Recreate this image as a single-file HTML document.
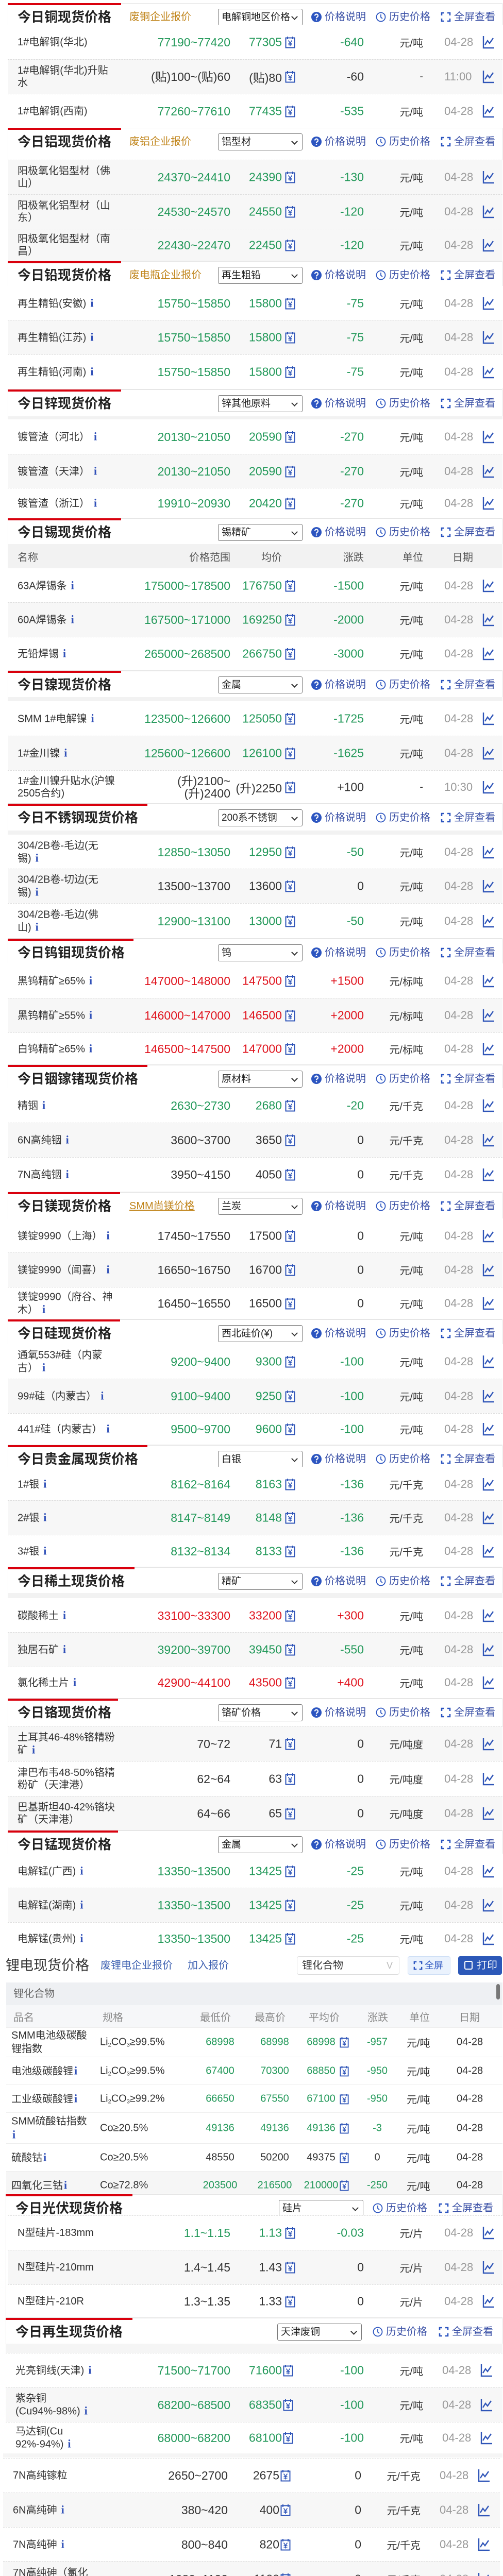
<!DOCTYPE html>
<html style="width:976px;height:5040px;overflow:hidden"><head><meta charset="utf-8">
<style>
*{box-sizing:border-box;margin:0;padding:0}
html,body{width:976px;height:5040px;overflow:hidden}
body{position:relative;background:#fff;font-family:"Liberation Sans","Noto Sans CJK SC",sans-serif;color:#333}
.sec{position:absolute;left:15px;width:960px;border:1px solid #e6e6e6;background:#fff}
.bar{position:absolute;left:-1px;top:-1px;height:4px;background:#d9000d}
.t{position:absolute;left:18px;top:8px;font-size:26px;font-weight:bold;color:#222;line-height:36px;white-space:nowrap}
.sub{position:absolute;left:235px;top:12px;font-size:20px;color:#c0841a;line-height:28px;white-space:nowrap}
.sel{position:absolute;left:407px;top:10px;width:164px;height:33px;border:1px solid #777;border-radius:3px;font-size:19px;line-height:31px;padding-left:6px;color:#222;white-space:nowrap;overflow:hidden}
.sel:after{content:"";position:absolute;right:10px;top:10px;width:7px;height:7px;border-right:2px solid #333;border-bottom:2px solid #333;transform:rotate(45deg)}
.lk{position:absolute;top:12px;font-size:20px;color:#3a50a6;line-height:28px;white-space:nowrap;display:flex;align-items:center}
.lk svg{margin-right:6px}
.r{position:absolute;left:15px;width:960px;height:67px;border-top:1px dashed #ddd;font-size:20px;color:#333;background:#fff;overflow:hidden}
.r.gr{background:#f7f7f7}
.r>*{position:absolute;top:50%;transform:translateY(-50%)}
.n{left:19px;width:190px;line-height:24px}
.n i,.i{font-family:"Liberation Serif",serif;font-weight:bold;font-style:normal;color:#3050b8;font-size:22px;margin-left:8px}
.p{right:528px;font-size:23px;text-align:right;line-height:24px;white-space:nowrap}
.a{right:428px;font-size:23px;white-space:nowrap}
.y{left:538px;width:20px;height:24px}
.c{right:269px;font-size:23px}
.u{right:154px;font-size:20px;white-space:nowrap}
.d{left:847px;font-size:22px;color:#999}
.k{left:921px;width:24px;height:26px}
.g .p,.g .a,.g .c{color:#23995a}
.rd .p,.rd .a,.rd .c{color:#e0141e}
.th{position:absolute;left:15px;width:960px;background:#f2f2f2;font-size:20px;color:#555}
.th span{position:absolute;top:50%;transform:translateY(-50%);white-space:nowrap}
.band{position:absolute;left:15px;width:960px;background:#f2f2f2}
.lr{position:absolute;left:12px;width:963px;border-top:1px solid #eee;font-size:20px;background:#fff}
.lr>*{position:absolute;top:50%;transform:translateY(-50%);white-space:nowrap}
.lr .ln{left:10px;width:165px;line-height:26px;white-space:normal}
.lr .sp{left:182px}
.lr .mn{left:376px;width:78px;text-align:center}
.lr .mx{left:482px;width:78px;text-align:center}
.lr .av{left:572px;width:78px;text-align:center}
.lr .yi{left:647px;width:18px;height:22px}
.lr .ch{left:680px;width:80px;text-align:center}
.lr .un{left:777px}
.lr .dt{left:874px;color:#333}
.lr.g .mn,.lr.g .mx,.lr.g .av,.lr.g .ch{color:#23995a}
sub{font-size:11px;vertical-align:-3px}
</style></head><body>
<svg width="0" height="0" style="position:absolute">
<defs>
<symbol id="q" viewBox="0 0 20 20"><circle cx="10" cy="10" r="10" fill="#2c55c0"/><path d="M7 7.5a3 3 0 1 1 4.5 2.6c-1 .6-1.5 1.1-1.5 2.4" stroke="#fff" stroke-width="2.2" fill="none"/><circle cx="10" cy="15.5" r="1.3" fill="#fff"/></symbol>
<symbol id="ck" viewBox="0 0 20 20"><circle cx="10" cy="10" r="8.5" stroke="#2c55c0" stroke-width="1.8" fill="none"/><path d="M10 5v5.5l3 2.5" stroke="#2c55c0" stroke-width="1.8" fill="none"/></symbol>
<symbol id="fs" viewBox="0 0 20 20"><path d="M2 7V2h5M13 2h5v5M18 13v5h-5M7 18H2v-5" stroke="#2c55c0" stroke-width="2.6" fill="none"/></symbol>
<symbol id="yn" viewBox="0 0 20 24"><rect x="1.5" y="3.5" width="17" height="19" stroke="#2f55b8" stroke-width="2" fill="#fff"/><path d="M5 1v5M15 1v5" stroke="#2f55b8" stroke-width="2"/><path d="M6.5 8.5l3.5 5 3.5-5M10 13.5v6M6.5 14h7M6.5 17h7" stroke="#2f55b8" stroke-width="1.6" fill="none"/></symbol>
<symbol id="kc" viewBox="0 0 24 26"><path d="M2 1v23h21" stroke="#2f55b8" stroke-width="2.4" fill="none"/><path d="M5 18l5-8 4 5 7-10" stroke="#2f55b8" stroke-width="2.4" fill="none"/></symbol>
</defs></svg>

<!-- Copper -->
<div class="sec" style="top:6px;height:243px"><div class="bar" style="width:220px"></div><div class="t">今日铜现货价格</div><div class="sub">废铜企业报价</div><div class="sel">电解铜地区价格</div>
<div class="lk" style="left:588px"><svg width="20" height="20"><use href="#q"/></svg>价格说明</div><div class="lk" style="left:713px"><svg width="20" height="20"><use href="#ck"/></svg>历史价格</div><div class="lk" style="left:839px"><svg width="20" height="20"><use href="#fs"/></svg>全屏查看</div></div>
<div class="r g" style="top:48px;border-top:none"><span class="n">1#电解铜(华北)</span><span class="p">77190~77420</span><span class="a">77305</span><svg class="y"><use href="#yn"/></svg><span class="c">-640</span><span class="u">元/吨</span><span class="d">04-28</span><svg class="k"><use href="#kc"/></svg></div>
<div class="r gr" style="top:115px"><span class="n">1#电解铜(华北)升贴水</span><span class="p">(贴)100~(贴)60</span><span class="a">(贴)80</span><svg class="y"><use href="#yn"/></svg><span class="c">-60</span><span class="u">-</span><span class="d">11:00</span><svg class="k"><use href="#kc"/></svg></div>
<div class="r g" style="top:182px;height:66px"><span class="n">1#电解铜(西南)</span><span class="p">77260~77610</span><span class="a">77435</span><svg class="y"><use href="#yn"/></svg><span class="c">-535</span><span class="u">元/吨</span><span class="d">04-28</span><svg class="k"><use href="#kc"/></svg></div>

<!-- Aluminium -->
<div class="sec" style="top:248px;height:259px"><div class="bar" style="width:220px"></div><div class="t">今日铝现货价格</div><div class="sub">废铝企业报价</div><div class="sel">铝型材</div>
<div class="lk" style="left:588px"><svg width="20" height="20"><use href="#q"/></svg>价格说明</div><div class="lk" style="left:713px"><svg width="20" height="20"><use href="#ck"/></svg>历史价格</div><div class="lk" style="left:839px"><svg width="20" height="20"><use href="#fs"/></svg>全屏查看</div></div>
<div class="r g gr" style="top:310px"><span class="n">阳极氧化铝型材（佛山）</span><span class="p">24370~24410</span><span class="a">24390</span><svg class="y"><use href="#yn"/></svg><span class="c">-130</span><span class="u">元/吨</span><span class="d">04-28</span><svg class="k"><use href="#kc"/></svg></div>
<div class="r g gr" style="top:377px"><span class="n">阳极氧化铝型材（山东）</span><span class="p">24530~24570</span><span class="a">24550</span><svg class="y"><use href="#yn"/></svg><span class="c">-120</span><span class="u">元/吨</span><span class="d">04-28</span><svg class="k"><use href="#kc"/></svg></div>
<div class="r g gr" style="top:444px;height:62px"><span class="n">阳极氧化铝型材（南昌）</span><span class="p">22430~22470</span><span class="a">22450</span><svg class="y"><use href="#yn"/></svg><span class="c">-120</span><span class="u">元/吨</span><span class="d">04-28</span><svg class="k"><use href="#kc"/></svg></div>

<!-- Lead -->
<div class="sec" style="top:507px;height:249px"><div class="bar" style="width:220px"></div><div class="t">今日铅现货价格</div><div class="sub">废电瓶企业报价</div><div class="sel">再生粗铅</div>
<div class="lk" style="left:588px"><svg width="20" height="20"><use href="#q"/></svg>价格说明</div><div class="lk" style="left:713px"><svg width="20" height="20"><use href="#ck"/></svg>历史价格</div><div class="lk" style="left:839px"><svg width="20" height="20"><use href="#fs"/></svg>全屏查看</div></div>
<div class="r g" style="top:555px;border-top:none"><span class="n">再生精铅(安徽)<i>i</i></span><span class="p">15750~15850</span><span class="a">15800</span><svg class="y"><use href="#yn"/></svg><span class="c">-75</span><span class="u">元/吨</span><span class="d">04-28</span><svg class="k"><use href="#kc"/></svg></div>
<div class="r g gr" style="top:621px"><span class="n">再生精铅(江苏)<i>i</i></span><span class="p">15750~15850</span><span class="a">15800</span><svg class="y"><use href="#yn"/></svg><span class="c">-75</span><span class="u">元/吨</span><span class="d">04-28</span><svg class="k"><use href="#kc"/></svg></div>
<div class="r g" style="top:688px;height:66px"><span class="n">再生精铅(河南)<i>i</i></span><span class="p">15750~15850</span><span class="a">15800</span><svg class="y"><use href="#yn"/></svg><span class="c">-75</span><span class="u">元/吨</span><span class="d">04-28</span><svg class="k"><use href="#kc"/></svg></div>

<!-- Zinc -->
<div class="sec" style="top:756px;height:250px"><div class="bar" style="width:220px"></div><div class="t">今日锌现货价格</div><div class="sel">锌其他原料</div>
<div class="lk" style="left:588px"><svg width="20" height="20"><use href="#q"/></svg>价格说明</div><div class="lk" style="left:713px"><svg width="20" height="20"><use href="#ck"/></svg>历史价格</div><div class="lk" style="left:839px"><svg width="20" height="20"><use href="#fs"/></svg>全屏查看</div></div>
<div class="band" style="top:808px;height:6px"></div>
<div class="r g" style="top:814px;border-top:none"><span class="n">镀管渣（河北）<i>i</i></span><span class="p">20130~21050</span><span class="a">20590</span><svg class="y"><use href="#yn"/></svg><span class="c">-270</span><span class="u">元/吨</span><span class="d">04-28</span><svg class="k"><use href="#kc"/></svg></div>
<div class="r g gr" style="top:881px"><span class="n">镀管渣（天津）<i>i</i></span><span class="p">20130~21050</span><span class="a">20590</span><svg class="y"><use href="#yn"/></svg><span class="c">-270</span><span class="u">元/吨</span><span class="d">04-28</span><svg class="k"><use href="#kc"/></svg></div>
<div class="r g" style="top:947px;height:58px"><span class="n">镀管渣（浙江）<i>i</i></span><span class="p">19910~20930</span><span class="a">20420</span><svg class="y"><use href="#yn"/></svg><span class="c">-270</span><span class="u">元/吨</span><span class="d">04-28</span><svg class="k"><use href="#kc"/></svg></div>

<!-- Tin -->
<div class="sec" style="top:1006px;height:296px"><div class="bar" style="width:220px"></div><div class="t">今日锡现货价格</div><div class="sel">锡精矿</div>
<div class="lk" style="left:588px"><svg width="20" height="20"><use href="#q"/></svg>价格说明</div><div class="lk" style="left:713px"><svg width="20" height="20"><use href="#ck"/></svg>历史价格</div><div class="lk" style="left:839px"><svg width="20" height="20"><use href="#fs"/></svg>全屏查看</div></div>
<div class="th" style="top:1056px;height:47px"><span style="left:19px">名称</span><span style="right:528px">价格范围</span><span style="right:428px">均价</span><span style="right:269px">涨跌</span><span style="right:154px">单位</span><span style="left:863px">日期</span></div>
<div class="r g" style="top:1103px;border-top:none"><span class="n">63A焊锡条<i>i</i></span><span class="p">175000~178500</span><span class="a">176750</span><svg class="y"><use href="#yn"/></svg><span class="c">-1500</span><span class="u">元/吨</span><span class="d">04-28</span><svg class="k"><use href="#kc"/></svg></div>
<div class="r g gr" style="top:1169px"><span class="n">60A焊锡条<i>i</i></span><span class="p">167500~171000</span><span class="a">169250</span><svg class="y"><use href="#yn"/></svg><span class="c">-2000</span><span class="u">元/吨</span><span class="d">04-28</span><svg class="k"><use href="#kc"/></svg></div>
<div class="r g" style="top:1236px;height:65px"><span class="n">无铅焊锡<i>i</i></span><span class="p">265000~268500</span><span class="a">266750</span><svg class="y"><use href="#yn"/></svg><span class="c">-3000</span><span class="u">元/吨</span><span class="d">04-28</span><svg class="k"><use href="#kc"/></svg></div>

<!-- Nickel -->
<div class="sec" style="top:1302px;height:258px"><div class="bar" style="width:220px"></div><div class="t">今日镍现货价格</div><div class="sel">金属</div>
<div class="lk" style="left:588px"><svg width="20" height="20"><use href="#q"/></svg>价格说明</div><div class="lk" style="left:713px"><svg width="20" height="20"><use href="#ck"/></svg>历史价格</div><div class="lk" style="left:839px"><svg width="20" height="20"><use href="#fs"/></svg>全屏查看</div></div>
<div class="band" style="top:1353px;height:8px"></div>
<div class="r g" style="top:1361px;border-top:none"><span class="n">SMM 1#电解镍<i>i</i></span><span class="p">123500~126600</span><span class="a">125050</span><svg class="y"><use href="#yn"/></svg><span class="c">-1725</span><span class="u">元/吨</span><span class="d">04-28</span><svg class="k"><use href="#kc"/></svg></div>
<div class="r g gr" style="top:1428px"><span class="n">1#金川镍<i>i</i></span><span class="p">125600~126600</span><span class="a">126100</span><svg class="y"><use href="#yn"/></svg><span class="c">-1625</span><span class="u">元/吨</span><span class="d">04-28</span><svg class="k"><use href="#kc"/></svg></div>
<div class="r" style="top:1495px;height:64px"><span class="n">1#金川镍升贴水(沪镍2505合约)</span><span class="p">(升)2100~<br>(升)2400</span><span class="a">(升)2250</span><svg class="y"><use href="#yn"/></svg><span class="c">+100</span><span class="u">-</span><span class="d">10:30</span><svg class="k"><use href="#kc"/></svg></div>

<!-- Stainless -->
<div class="sec" style="top:1560px;height:262px"><div class="bar" style="width:271px"></div><div class="t">今日不锈钢现货价格</div><div class="sel">200系不锈钢</div>
<div class="lk" style="left:588px"><svg width="20" height="20"><use href="#q"/></svg>价格说明</div><div class="lk" style="left:713px"><svg width="20" height="20"><use href="#ck"/></svg>历史价格</div><div class="lk" style="left:839px"><svg width="20" height="20"><use href="#fs"/></svg>全屏查看</div></div>
<div class="band" style="top:1612px;height:8px"></div>
<div class="r g" style="top:1620px;border-top:none"><span class="n">304/2B卷-毛边(无锡)<i>i</i></span><span class="p">12850~13050</span><span class="a">12950</span><svg class="y"><use href="#yn"/></svg><span class="c">-50</span><span class="u">元/吨</span><span class="d">04-28</span><svg class="k"><use href="#kc"/></svg></div>
<div class="r gr" style="top:1686px"><span class="n">304/2B卷-切边(无锡)<i>i</i></span><span class="p">13500~13700</span><span class="a">13600</span><svg class="y"><use href="#yn"/></svg><span class="c">0</span><span class="u">元/吨</span><span class="d">04-28</span><svg class="k"><use href="#kc"/></svg></div>
<div class="r g" style="top:1753px;height:68px"><span class="n">304/2B卷-毛边(佛山)<i>i</i></span><span class="p">12900~13100</span><span class="a">13000</span><svg class="y"><use href="#yn"/></svg><span class="c">-50</span><span class="u">元/吨</span><span class="d">04-28</span><svg class="k"><use href="#kc"/></svg></div>

<!-- Tungsten -->
<div class="sec" style="top:1822px;height:245px"><div class="bar" style="width:244px"></div><div class="t">今日钨钼现货价格</div><div class="sel">钨</div>
<div class="lk" style="left:588px"><svg width="20" height="20"><use href="#q"/></svg>价格说明</div><div class="lk" style="left:713px"><svg width="20" height="20"><use href="#ck"/></svg>历史价格</div><div class="lk" style="left:839px"><svg width="20" height="20"><use href="#fs"/></svg>全屏查看</div></div>
<div class="r rd" style="top:1870px;border-top:none"><span class="n">黑钨精矿≥65%<i>i</i></span><span class="p">147000~148000</span><span class="a">147500</span><svg class="y"><use href="#yn"/></svg><span class="c">+1500</span><span class="u">元/标吨</span><span class="d">04-28</span><svg class="k"><use href="#kc"/></svg></div>
<div class="r rd gr" style="top:1937px"><span class="n">黑钨精矿≥55%<i>i</i></span><span class="p">146000~147000</span><span class="a">146500</span><svg class="y"><use href="#yn"/></svg><span class="c">+2000</span><span class="u">元/标吨</span><span class="d">04-28</span><svg class="k"><use href="#kc"/></svg></div>
<div class="r rd" style="top:2004px;height:62px"><span class="n">白钨精矿≥65%<i>i</i></span><span class="p">146500~147500</span><span class="a">147000</span><svg class="y"><use href="#yn"/></svg><span class="c">+2000</span><span class="u">元/标吨</span><span class="d">04-28</span><svg class="k"><use href="#kc"/></svg></div>

<!-- Indium -->
<div class="sec" style="top:2067px;height:247px"><div class="bar" style="width:271px"></div><div class="t">今日铟镓锗现货价格</div><div class="sel">原材料</div>
<div class="lk" style="left:588px"><svg width="20" height="20"><use href="#q"/></svg>价格说明</div><div class="lk" style="left:713px"><svg width="20" height="20"><use href="#ck"/></svg>历史价格</div><div class="lk" style="left:839px"><svg width="20" height="20"><use href="#fs"/></svg>全屏查看</div></div>
<div class="r g" style="top:2112px;border-top:none"><span class="n">精铟<i>i</i></span><span class="p">2630~2730</span><span class="a">2680</span><svg class="y"><use href="#yn"/></svg><span class="c">-20</span><span class="u">元/千克</span><span class="d">04-28</span><svg class="k"><use href="#kc"/></svg></div>
<div class="r gr" style="top:2179px"><span class="n">6N高纯铟<i>i</i></span><span class="p">3600~3700</span><span class="a">3650</span><svg class="y"><use href="#yn"/></svg><span class="c">0</span><span class="u">元/千克</span><span class="d">04-28</span><svg class="k"><use href="#kc"/></svg></div>
<div class="r" style="top:2246px;height:67px"><span class="n">7N高纯铟<i>i</i></span><span class="p">3950~4150</span><span class="a">4050</span><svg class="y"><use href="#yn"/></svg><span class="c">0</span><span class="u">元/千克</span><span class="d">04-28</span><svg class="k"><use href="#kc"/></svg></div>

<!-- Magnesium -->
<div class="sec" style="top:2314px;height:247px"><div class="bar" style="width:218px"></div><div class="t">今日镁现货价格</div><div class="sub" style="text-decoration:underline">SMM尚镁价格</div><div class="sel">兰炭</div>
<div class="lk" style="left:588px"><svg width="20" height="20"><use href="#q"/></svg>价格说明</div><div class="lk" style="left:713px"><svg width="20" height="20"><use href="#ck"/></svg>历史价格</div><div class="lk" style="left:839px"><svg width="20" height="20"><use href="#fs"/></svg>全屏查看</div></div>
<div class="r" style="top:2365px;border-top:none"><span class="n">镁锭9990（上海）<i>i</i></span><span class="p">17450~17550</span><span class="a">17500</span><svg class="y"><use href="#yn"/></svg><span class="c">0</span><span class="u">元/吨</span><span class="d">04-28</span><svg class="k"><use href="#kc"/></svg></div>
<div class="r gr" style="top:2431px"><span class="n">镁锭9990（闻喜）<i>i</i></span><span class="p">16650~16750</span><span class="a">16700</span><svg class="y"><use href="#yn"/></svg><span class="c">0</span><span class="u">元/吨</span><span class="d">04-28</span><svg class="k"><use href="#kc"/></svg></div>
<div class="r" style="top:2498px;height:62px"><span class="n">镁锭9990（府谷、神木）<i>i</i></span><span class="p">16450~16550</span><span class="a">16500</span><svg class="y"><use href="#yn"/></svg><span class="c">0</span><span class="u">元/吨</span><span class="d">04-28</span><svg class="k"><use href="#kc"/></svg></div>

<!-- Silicon -->
<div class="sec" style="top:2561px;height:244px"><div class="bar" style="width:218px"></div><div class="t">今日硅现货价格</div><div class="sel">西北硅价(¥)</div>
<div class="lk" style="left:588px"><svg width="20" height="20"><use href="#q"/></svg>价格说明</div><div class="lk" style="left:713px"><svg width="20" height="20"><use href="#ck"/></svg>历史价格</div><div class="lk" style="left:839px"><svg width="20" height="20"><use href="#fs"/></svg>全屏查看</div></div>
<div class="r g" style="top:2609px;border-top:none"><span class="n" style="width:172px">通氧553#硅（内蒙古）<i>i</i></span><span class="p">9200~9400</span><span class="a">9300</span><svg class="y"><use href="#yn"/></svg><span class="c">-100</span><span class="u">元/吨</span><span class="d">04-28</span><svg class="k"><use href="#kc"/></svg></div>
<div class="r g gr" style="top:2676px"><span class="n">99#硅（内蒙古）<i>i</i></span><span class="p">9100~9400</span><span class="a">9250</span><svg class="y"><use href="#yn"/></svg><span class="c">-100</span><span class="u">元/吨</span><span class="d">04-28</span><svg class="k"><use href="#kc"/></svg></div>
<div class="r g" style="top:2743px;height:61px"><span class="n">441#硅（内蒙古）<i>i</i></span><span class="p">9500~9700</span><span class="a">9600</span><svg class="y"><use href="#yn"/></svg><span class="c">-100</span><span class="u">元/吨</span><span class="d">04-28</span><svg class="k"><use href="#kc"/></svg></div>

<!-- Precious -->
<div class="sec" style="top:2805px;height:237px"><div class="bar" style="width:271px"></div><div class="t">今日贵金属现货价格</div><div class="sel">白银</div>
<div class="lk" style="left:588px"><svg width="20" height="20"><use href="#q"/></svg>价格说明</div><div class="lk" style="left:713px"><svg width="20" height="20"><use href="#ck"/></svg>历史价格</div><div class="lk" style="left:839px"><svg width="20" height="20"><use href="#fs"/></svg>全屏查看</div></div>
<div class="r g" style="top:2847px;border-top:none"><span class="n">1#银<i>i</i></span><span class="p">8162~8164</span><span class="a">8163</span><svg class="y"><use href="#yn"/></svg><span class="c">-136</span><span class="u">元/千克</span><span class="d">04-28</span><svg class="k"><use href="#kc"/></svg></div>
<div class="r g gr" style="top:2912px"><span class="n">2#银<i>i</i></span><span class="p">8147~8149</span><span class="a">8148</span><svg class="y"><use href="#yn"/></svg><span class="c">-136</span><span class="u">元/千克</span><span class="d">04-28</span><svg class="k"><use href="#kc"/></svg></div>
<div class="r g" style="top:2979px;height:62px"><span class="n">3#银<i>i</i></span><span class="p">8132~8134</span><span class="a">8133</span><svg class="y"><use href="#yn"/></svg><span class="c">-136</span><span class="u">元/千克</span><span class="d">04-28</span><svg class="k"><use href="#kc"/></svg></div>

<!-- Rare earth -->
<div class="sec" style="top:3042px;height:255px"><div class="bar" style="width:246px"></div><div class="t">今日稀土现货价格</div><div class="sel">精矿</div>
<div class="lk" style="left:588px"><svg width="20" height="20"><use href="#q"/></svg>价格说明</div><div class="lk" style="left:713px"><svg width="20" height="20"><use href="#ck"/></svg>历史价格</div><div class="lk" style="left:839px"><svg width="20" height="20"><use href="#fs"/></svg>全屏查看</div></div>
<div class="band" style="top:3092px;height:10px"></div>
<div class="r rd" style="top:3102px;border-top:none"><span class="n">碳酸稀土<i>i</i></span><span class="p">33100~33300</span><span class="a">33200</span><svg class="y"><use href="#yn"/></svg><span class="c">+300</span><span class="u">元/吨</span><span class="d">04-28</span><svg class="k"><use href="#kc"/></svg></div>
<div class="r g gr" style="top:3168px"><span class="n">独居石矿<i>i</i></span><span class="p">39200~39700</span><span class="a">39450</span><svg class="y"><use href="#yn"/></svg><span class="c">-550</span><span class="u">元/吨</span><span class="d">04-28</span><svg class="k"><use href="#kc"/></svg></div>
<div class="r rd" style="top:3235px;height:61px"><span class="n">氯化稀土片<i>i</i></span><span class="p">42900~44100</span><span class="a">43500</span><svg class="y"><use href="#yn"/></svg><span class="c">+400</span><span class="u">元/吨</span><span class="d">04-28</span><svg class="k"><use href="#kc"/></svg></div>

<!-- Chromium -->
<div class="sec" style="top:3297px;height:256px"><div class="bar" style="width:214px"></div><div class="t">今日铬现货价格</div><div class="sel">铬矿价格</div>
<div class="lk" style="left:588px"><svg width="20" height="20"><use href="#q"/></svg>价格说明</div><div class="lk" style="left:713px"><svg width="20" height="20"><use href="#ck"/></svg>历史价格</div><div class="lk" style="left:839px"><svg width="20" height="20"><use href="#fs"/></svg>全屏查看</div></div>
<div class="r gr" style="top:3351px"><span class="n">土耳其46-48%铬精粉矿<i>i</i></span><span class="p">70~72</span><span class="a">71</span><svg class="y"><use href="#yn"/></svg><span class="c">0</span><span class="u">元/吨度</span><span class="d">04-28</span><svg class="k"><use href="#kc"/></svg></div>
<div class="r" style="top:3419px"><span class="n">津巴布韦48-50%铬精粉矿（天津港）</span><span class="p">62~64</span><span class="a">63</span><svg class="y"><use href="#yn"/></svg><span class="c">0</span><span class="u">元/吨度</span><span class="d">04-28</span><svg class="k"><use href="#kc"/></svg></div>
<div class="r gr" style="top:3486px;height:66px"><span class="n">巴基斯坦40-42%铬块矿（天津港）</span><span class="p">64~66</span><span class="a">65</span><svg class="y"><use href="#yn"/></svg><span class="c">0</span><span class="u">元/吨度</span><span class="d">04-28</span><svg class="k"><use href="#kc"/></svg></div>

<!-- Manganese -->
<div class="sec" style="top:3553px;height:240px"><div class="bar" style="width:214px"></div><div class="t">今日锰现货价格</div><div class="sel">金属</div>
<div class="lk" style="left:588px"><svg width="20" height="20"><use href="#q"/></svg>价格说明</div><div class="lk" style="left:713px"><svg width="20" height="20"><use href="#ck"/></svg>历史价格</div><div class="lk" style="left:839px"><svg width="20" height="20"><use href="#fs"/></svg>全屏查看</div></div>
<div class="r g" style="top:3598px;border-top:none"><span class="n">电解锰(广西)<i>i</i></span><span class="p">13350~13500</span><span class="a">13425</span><svg class="y"><use href="#yn"/></svg><span class="c">-25</span><span class="u">元/吨</span><span class="d">04-28</span><svg class="k"><use href="#kc"/></svg></div>
<div class="r g gr" style="top:3664px"><span class="n">电解锰(湖南)<i>i</i></span><span class="p">13350~13500</span><span class="a">13425</span><svg class="y"><use href="#yn"/></svg><span class="c">-25</span><span class="u">元/吨</span><span class="d">04-28</span><svg class="k"><use href="#kc"/></svg></div>
<div class="r g" style="top:3731px;height:62px"><span class="n">电解锰(贵州)<i>i</i></span><span class="p">13350~13500</span><span class="a">13425</span><svg class="y"><use href="#yn"/></svg><span class="c">-25</span><span class="u">元/吨</span><span class="d">04-28</span><svg class="k"><use href="#kc"/></svg></div>

<!-- Lithium -->
<div style="position:absolute;left:11px;top:3795px;font-size:27px;color:#333;line-height:40px">锂电现货价格</div>
<div style="position:absolute;left:195px;top:3801px;font-size:20px;color:#3c5fb0;line-height:28px">废锂电企业报价</div>
<div style="position:absolute;left:364px;top:3801px;font-size:20px;color:#3c5fb0;line-height:28px">加入报价</div>
<div style="position:absolute;left:576px;top:3797px;width:199px;height:36px;border:1px solid #ddd;border-radius:4px;font-size:20px;line-height:34px;padding-left:9px;color:#333">锂化合物<span style="position:absolute;right:12px;top:0;color:#bbb;font-size:18px">V</span></div>
<div style="position:absolute;left:791px;top:3797px;width:83px;height:36px;border:1px solid #cfdff5;border-radius:4px;background:#eaf2fd;font-size:18px;line-height:34px;color:#2c55c0;padding-left:32px"><svg width="18" height="18" style="position:absolute;left:10px;top:8px"><use href="#fs"/></svg>全屏</div>
<div style="position:absolute;left:889px;top:3797px;width:85px;height:36px;border-radius:4px;background:#2c58b8;font-size:20px;line-height:36px;color:#fff;padding-left:36px"><span style="position:absolute;left:12px;top:9px;width:16px;height:17px;border:2.5px solid #fff;border-radius:3px"></span>打印</div>
<div style="position:absolute;left:12px;top:3848px;width:963px;height:44px;background:#eef0f3;font-size:20px;color:#666;line-height:44px;padding-left:14px">锂化合物</div>
<div style="position:absolute;left:963px;top:3851px;width:7px;height:30px;border-radius:4px;background:#777"></div>
<div class="th" style="left:12px;width:963px;top:3892px;height:43px;background:#f6f7f9;color:#888"><span style="left:14px">品名</span><span style="left:187px">规格</span><span style="left:376px">最低价</span><span style="left:482px">最高价</span><span style="left:587px">平均价</span><span style="left:701px">涨跌</span><span style="left:782px">单位</span><span style="left:879px">日期</span></div>
<div class="lr g" style="top:3935px;height:57px"><span class="ln">SMM电池级碳酸锂指数</span><span class="sp">Li<sub>2</sub>CO<sub>3</sub>≥99.5%</span><span class="mn">68998</span><span class="mx">68998</span><span class="av">68998</span><svg class="yi" viewBox="0 0 20 24"><use href="#yn"/></svg><span class="ch">-957</span><span class="un">元/吨</span><span class="dt">04-28</span></div>
<div class="lr g" style="top:3992px;height:54px"><span class="ln">电池级碳酸锂<i class="i" style="margin-left:2px">i</i></span><span class="sp">Li<sub>2</sub>CO<sub>3</sub>≥99.5%</span><span class="mn">67400</span><span class="mx">70300</span><span class="av">68850</span><svg class="yi" viewBox="0 0 20 24"><use href="#yn"/></svg><span class="ch">-950</span><span class="un">元/吨</span><span class="dt">04-28</span></div>
<div class="lr g" style="top:4046px;height:54px"><span class="ln">工业级碳酸锂<i class="i" style="margin-left:2px">i</i></span><span class="sp">Li<sub>2</sub>CO<sub>3</sub>≥99.2%</span><span class="mn">66650</span><span class="mx">67550</span><span class="av">67100</span><svg class="yi" viewBox="0 0 20 24"><use href="#yn"/></svg><span class="ch">-950</span><span class="un">元/吨</span><span class="dt">04-28</span></div>
<div class="lr g" style="top:4100px;height:60px"><span class="ln">SMM硫酸钴指数<br><i class="i" style="margin-left:2px">i</i></span><span class="sp">Co≥20.5%</span><span class="mn">49136</span><span class="mx">49136</span><span class="av">49136</span><svg class="yi" viewBox="0 0 20 24"><use href="#yn"/></svg><span class="ch">-3</span><span class="un">元/吨</span><span class="dt">04-28</span></div>
<div class="lr" style="top:4160px;height:54px"><span class="ln">硫酸钴<i class="i" style="margin-left:2px">i</i></span><span class="sp">Co≥20.5%</span><span class="mn">48550</span><span class="mx">50200</span><span class="av">49375</span><svg class="yi" viewBox="0 0 20 24"><use href="#yn"/></svg><span class="ch">0</span><span class="un">元/吨</span><span class="dt">04-28</span></div>
<div class="lr g" style="top:4214px;height:44px;background:#f6f6f6;overflow:hidden"><span class="ln" style="top:62%">四氧化三钴<i class="i" style="margin-left:2px">i</i></span><span class="sp" style="top:62%">Co≥72.8%</span><span class="mn" style="top:62%">203500</span><span class="mx" style="top:62%">216500</span><span class="av" style="top:62%">210000</span><svg class="yi" viewBox="0 0 20 24" style="top:62%"><use href="#yn"/></svg><span class="ch" style="top:62%">-250</span><span class="un" style="top:62%">元/吨</span><span class="dt" style="top:62%">04-28</span></div>

<!-- PV -->
<div class="sec" style="top:4259px;left:11px;width:964px;height:240px"><div class="bar" style="width:246px"></div><div class="t">今日光伏现货价格</div><div class="sel" style="left:529px">硅片</div>
<div class="lk" style="left:711px"><svg width="20" height="20"><use href="#ck"/></svg>历史价格</div><div class="lk" style="left:839px"><svg width="20" height="20"><use href="#fs"/></svg>全屏查看</div></div>
<div class="r g" style="top:4300px"><span class="n">N型硅片-183mm</span><span class="p">1.1~1.15</span><span class="a">1.13</span><svg class="y"><use href="#yn"/></svg><span class="c">-0.03</span><span class="u">元/片</span><span class="d">04-28</span><svg class="k"><use href="#kc"/></svg></div>
<div class="r gr" style="top:4367px"><span class="n">N型硅片-210mm</span><span class="p">1.4~1.45</span><span class="a">1.43</span><svg class="y"><use href="#yn"/></svg><span class="c">0</span><span class="u">元/片</span><span class="d">04-28</span><svg class="k"><use href="#kc"/></svg></div>
<div class="r" style="top:4434px;height:64px"><span class="n">N型硅片-210R</span><span class="p">1.3~1.35</span><span class="a">1.33</span><svg class="y"><use href="#yn"/></svg><span class="c">0</span><span class="u">元/片</span><span class="d">04-28</span><svg class="k"><use href="#kc"/></svg></div>

<!-- Recycling -->
<div class="sec" style="top:4499px;left:11px;width:964px;height:263px"><div class="bar" style="width:246px"></div><div class="t">今日再生现货价格</div><div class="sel" style="left:526px">天津废铜</div>
<div class="lk" style="left:711px"><svg width="20" height="20"><use href="#ck"/></svg>历史价格</div><div class="lk" style="left:839px"><svg width="20" height="20"><use href="#fs"/></svg>全屏查看</div></div>
<div class="band" style="left:11px;width:964px;top:4549px;height:18px;background:#f5f5f5"></div>
<div class="r g" style="top:4567px;left:11px;width:964px"><span class="n">光亮铜线(天津)<i>i</i></span><span class="p">71500~71700</span><span class="a">71600</span><svg class="y"><use href="#yn"/></svg><span class="c">-100</span><span class="u">元/吨</span><span class="d">04-28</span><svg class="k"><use href="#kc"/></svg></div>
<div class="r g gr" style="top:4634px;left:11px;width:964px"><span class="n">紫杂铜(Cu94%-98%)<i>i</i></span><span class="p">68200~68500</span><span class="a">68350</span><svg class="y"><use href="#yn"/></svg><span class="c">-100</span><span class="u">元/吨</span><span class="d">04-28</span><svg class="k"><use href="#kc"/></svg></div>
<div class="r g" style="top:4701px;left:11px;width:964px;height:61px"><span class="n">马达铜(Cu 92%-94%)<i>i</i></span><span class="p">68000~68200</span><span class="a">68100</span><svg class="y"><use href="#yn"/></svg><span class="c">-100</span><span class="u">元/吨</span><span class="d">04-28</span><svg class="k"><use href="#kc"/></svg></div>

<!-- Gallium / Arsenic -->
<div class="band" style="left:6px;width:969px;top:4762px;height:8px;background:#f5f5f5"></div>
<div class="r" style="top:4771px;left:6px;width:964px"><span class="n">7N高纯镓粒</span><span class="p">2650~2700</span><span class="a">2675</span><svg class="y"><use href="#yn"/></svg><span class="c">0</span><span class="u">元/千克</span><span class="d">04-28</span><svg class="k"><use href="#kc"/></svg></div>
<div class="r gr" style="top:4838px;left:6px;width:964px"><span class="n">6N高纯砷<i>i</i></span><span class="p">380~420</span><span class="a">400</span><svg class="y"><use href="#yn"/></svg><span class="c">0</span><span class="u">元/千克</span><span class="d">04-28</span><svg class="k"><use href="#kc"/></svg></div>
<div class="r" style="top:4905px;left:6px;width:964px"><span class="n">7N高纯砷<i>i</i></span><span class="p">800~840</span><span class="a">820</span><svg class="y"><use href="#yn"/></svg><span class="c">0</span><span class="u">元/千克</span><span class="d">04-28</span><svg class="k"><use href="#kc"/></svg></div>
<div class="r gr" style="top:4971px;left:6px;width:964px;height:69px"><span class="n" style="width:150px">7N高纯砷（氯化精馏）</span><span class="p">1080~1120</span><span class="a">1100</span><svg class="y"><use href="#yn"/></svg><span class="c">0</span><span class="u">元/千克</span><span class="d">04-28</span><svg class="k"><use href="#kc"/></svg></div>
</body></html>
